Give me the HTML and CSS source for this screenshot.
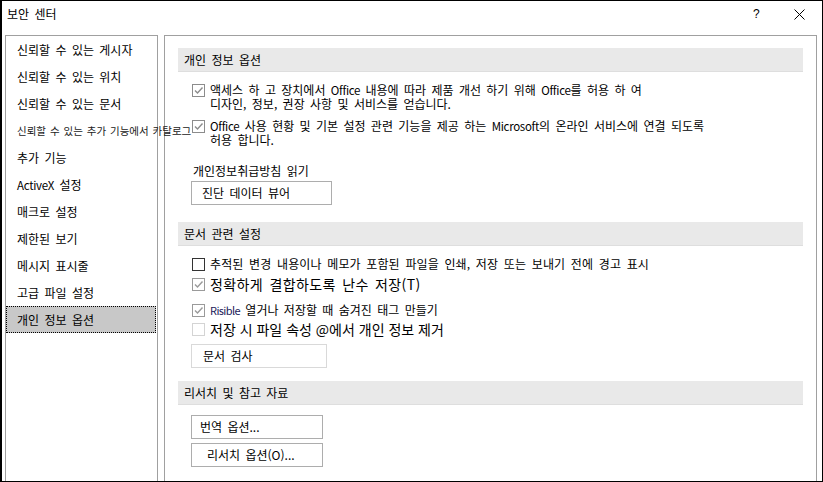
FILE: index.html
```html
<!DOCTYPE html>
<html lang="ko">
<head>
<meta charset="utf-8">
<title>보안 센터</title>
<link rel="stylesheet" href="styles.css">
</head>
<body>
<div class="window">
  <div class="titlebar">
    <span class="title">보안 센터</span>
    <span class="help">?</span>
    <span class="close">
      <svg width="11" height="11" viewBox="0 0 11 11"><path d="M0.5 0.5 L10.5 10.5 M10.5 0.5 L0.5 10.5" stroke="#000" stroke-width="1" fill="none"/></svg>
    </span>
  </div>
  <div class="main">
    <div class="nav">
      <div class="nav-item">신뢰할 수 있는 게시자</div>
      <div class="nav-item">신뢰할 수 있는 위치</div>
      <div class="nav-item">신뢰할 수 있는 문서</div>
      <div class="nav-item nav-small">신뢰할 수 있는 추가 기능에서 카탈로그</div>
      <div class="nav-item">추가 기능</div>
      <div class="nav-item"><span class="latin">ActiveX</span> 설정</div>
      <div class="nav-item">매크로 설정</div>
      <div class="nav-item">제한된 보기</div>
      <div class="nav-item">메시지 표시줄</div>
      <div class="nav-item">고급 파일 설정</div>
      <div class="nav-item selected">개인 정보 옵션</div>
    </div>
    <div class="content">
      <div class="section-head head1">개인 정보 옵션</div>

      <div class="cb-row row1">
        <span class="cb checked"><svg width="11" height="11" viewBox="0 0 11 11"><path d="M2 5.5 L4.5 8 L9.5 2.5" stroke="#8c8c8c" stroke-width="1.4" fill="none"/></svg></span>
        <span class="cb-text">액세스 하 고 장치에서 <span class="latin">Office</span> 내용에 따라 제품 개선 하기 위해 <span class="latin">Office</span>를 허용 하 여<br>디자인, 정보, 권장 사항 및 서비스를 얻습니다.</span>
      </div>
      <div class="cb-row row2">
        <span class="cb checked"><svg width="11" height="11" viewBox="0 0 11 11"><path d="M2 5.5 L4.5 8 L9.5 2.5" stroke="#8c8c8c" stroke-width="1.4" fill="none"/></svg></span>
        <span class="cb-text"><span class="latin">Office</span> 사용 현황 및 기본 설정 관련 기능을 제공 하는 <span class="latin">Microsoft</span>의 온라인 서비스에 연결 되도록<br>허용 합니다.</span>
      </div>
      <div class="privacy-link">개인정보취급방침 읽기</div>
      <div class="btn btn-diag">진단 데이터 뷰어</div>

      <div class="section-head head2">문서 관련 설정</div>
      <div class="cb-row rowa">
        <span class="cb enabled"></span>
        <span class="cb-text">추적된 변경 내용이나 메모가 포함된 파일을 인쇄, 저장 또는 보내기 전에 경고 표시</span>
      </div>
      <div class="cb-row rowb">
        <span class="cb checked light"><svg width="11" height="11" viewBox="0 0 11 11"><path d="M2 5.5 L4.5 8 L9.5 2.5" stroke="#9a9a9a" stroke-width="1.4" fill="none"/></svg></span>
        <span class="cb-text big">정확하게 결합하도록 난수 저장(T)</span>
      </div>
      <div class="cb-row rowc">
        <span class="cb checked light"><svg width="11" height="11" viewBox="0 0 11 11"><path d="M2 5.5 L4.5 8 L9.5 2.5" stroke="#9a9a9a" stroke-width="1.4" fill="none"/></svg></span>
        <span class="cb-text"><span class="latin narrow">Risible</span> 열거나 저장할 때 숨겨진 태그 만들기</span>
      </div>
      <div class="cb-row rowd">
        <span class="cb disabled"></span>
        <span class="cb-text big tight">저장 시 파일 속성 @에서 개인 정보 제거</span>
      </div>
      <div class="btn btn-inspect">문서 검사</div>

      <div class="section-head head3">리서치 및 참고 자료</div>
      <div class="btn btn-trans">번역 옵션...</div>
      <div class="btn btn-research">리서치 옵션(O)...</div>
    </div>
  </div>
</div>
</body>
</html>
```
FILE: styles.css
```css
* { box-sizing: border-box; }
html, body { margin: 0; padding: 0; background: #fff; }
body {
  font-family: "Noto Sans CJK KR", "Noto Sans", sans-serif;
  font-size: 12px;
  color: #000;
  word-spacing: 2px;
}
.window {
  width: 823px;
  height: 482px;
  border: 1px solid #000;
  border-left-width: 2px;
  display: flex;
  flex-direction: column;
  overflow: hidden;
  background: #fff;
}
.titlebar {
  height: 34px;
  flex: none;
  display: flex;
  align-items: flex-start;
  padding-top: 4px;
  padding-left: 5px;
  position: relative;
}
.title { font-size: 12px; line-height: 18px; }
.help {
  position: absolute;
  left: 751px;
  top: 4px;
  font-family: "Liberation Sans", sans-serif;
  font-size: 12px;
  line-height: 18px;
}
.close {
  position: absolute;
  left: 792px;
  top: 8px;
  line-height: 0;
}
.main {
  flex: 1;
  display: flex;
  gap: 6px;
  padding-left: 3px;
  min-height: 0;
}
.nav {
  width: 153px;
  flex: none;
  border: 1px solid #a0a0a0;
  border-bottom: none;
  padding: 0 1px 0 0;
  display: flex;
  flex-direction: column;
}
.nav-item {
  height: 27px;
  line-height: 27px;
  padding-left: 11px;
  white-space: nowrap;
}
.nav-small {
  font-size: 10.5px;
  letter-spacing: 0;
  word-spacing: 1px;
  color: #222;
  position: relative;
  z-index: 1;
}
.nav-item.selected {
  background: #c8c8c8;
  outline: 1px dotted #000;
  outline-offset: -1px;
}
.latin {
  font-size: 11.5px;
  letter-spacing: -0.3px;
}
.narrow {
  font-size: 11px;
  letter-spacing: -0.6px;
  color: #1b1b5a;
}
.content {
  width: 653px;
  flex: none;
  border: 1px solid #a0a0a0;
  border-bottom: none;
  padding: 0 13px 0 13px;
  display: flex;
  flex-direction: column;
  align-items: flex-start;
}
.section-head {
  align-self: stretch;
  height: 24px;
  line-height: 23px;
  background: #e9e9e9;
  border-bottom: 1px solid #dedede;
  padding-left: 6px;
}
.head1 { margin-top: 12px; }
.head2 { margin-top: 17px; }
.head3 { margin-top: 13px; }
.cb-row {
  display: flex;
  align-items: flex-start;
  margin-left: 14px;
  gap: 5px;
}
.cb {
  width: 13px;
  height: 13px;
  flex: none;
  border: 1px solid #8c8c8c;
  background: #fff;
  display: flex;
  align-items: center;
  justify-content: center;
}
.cb.light { border-color: #9a9a9a; }
.cb.enabled { border-color: #333; }
.cb.disabled { border-color: #d4d4d4; }
.cb-text { line-height: 14px; white-space: nowrap; }
.row1 { margin-top: 11px; }
.row2 { margin-top: 8px; }
.row1 .cb, .row2 .cb { margin-top: 1px; }
.rowa { margin-top: 9px; }
.rowa .cb-text { line-height: 18px; word-spacing: 2.2px; letter-spacing: 0.1px; }
.rowa .cb { margin-top: 3px; }
.rowb { margin-top: 1px; }
.rowb .cb-text, .rowd .cb-text { line-height: 20px; }
.rowb .cb, .rowd .cb { margin-top: 4px; }
.rowc { margin-top: 7px; }
.rowc .cb-text { line-height: 18px; }
.rowc .cb { margin-top: 3px; }
.rowd { margin-top: 0; }
.big { font-size: 14px; letter-spacing: 0.4px; }
.big.tight { letter-spacing: 0; word-spacing: 0; }
.privacy-link {
  margin-top: 16px;
  margin-left: 15px;
  line-height: 16px;
}
.btn {
  height: 24px;
  line-height: 22px;
  border: 1px solid #adadad;
  background: #fff;
  margin-left: 13px;
  white-space: nowrap;
}
.btn-diag { width: 141px; margin-top: 2px; padding-left: 10px; }
.btn-inspect { width: 136px; margin-top: 5px; padding-left: 11px; border-color: #d9d9d9; }
.btn-trans { width: 132px; margin-top: 10px; padding-left: 8px; }
.btn-research { width: 132px; margin-top: 4px; padding-left: 15px; }
```
